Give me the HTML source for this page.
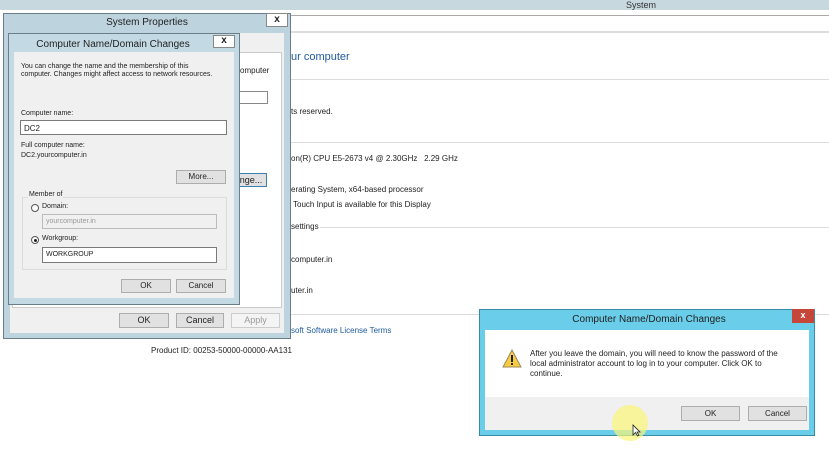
<!DOCTYPE html>
<html><head><style>
*{margin:0;padding:0;box-sizing:border-box}
body{width:829px;height:467px;overflow:hidden;background:#fff;font-family:"Liberation Sans",sans-serif;position:relative;font-size:9px;color:#222}
.a{position:absolute}
.btn{position:absolute;background:#e1e1e1;border:1px solid #adadad;text-align:center;font-size:9px;color:#222}
.in{position:absolute;background:#fff;border:1px solid #7a7a7a;font-size:8px;padding:3px 3px;color:#222}
.hr{position:absolute;left:291px;right:0;height:1px;background:#dcdcdc}
.t{position:absolute;font-size:8px;color:#222;white-space:nowrap}
</style></head><body>
<div class="a" style="left:0;top:0;width:829px;height:10px;background:#c7d8df"></div>
<div class="t" style="left:626px;top:0;font-size:9px;color:#333">System</div>
<div class="a" style="left:291px;top:15px;right:0;height:1px;background:#aaa"></div>
<div class="hr" style="top:31px;background:#ddd;height:2px"></div>
<div class="t" style="left:291px;top:51px;font-size:11px;color:#1e5a9e">ur computer</div>
<div class="hr" style="top:79px"></div>
<div class="t" style="left:291px;top:107px">ts reserved.</div>
<div class="hr" style="top:142px"></div>
<div class="t" style="left:291px;top:154px">on(R) CPU E5-2673 v4 @ 2.30GHz&nbsp;&nbsp; 2.29 GHz</div>
<div class="t" style="left:291px;top:185px">erating System, x64-based processor</div>
<div class="t" style="left:293px;top:200px">Touch Input is available for this Display</div>
<div class="t" style="left:291px;top:222px">settings</div>
<div class="a" style="left:320px;top:227px;right:0;height:1px;background:#ddd"></div>
<div class="t" style="left:291px;top:255px">computer.in</div>
<div class="t" style="left:291px;top:286px">uter.in</div>
<div class="hr" style="top:314px"></div>
<div class="t" style="left:291px;top:326px;color:#1e5a9e">soft Software License Terms</div>
<div class="t" style="left:151px;top:346px">Product ID: 00253-50000-00000-AA131</div>

<!-- System Properties -->
<div class="a" style="left:3px;top:13px;width:288px;height:326px;background:#bdd3de;border:1px solid #6b7f8a"></div>
<div class="t" style="left:3px;top:17px;width:288px;text-align:center;font-size:10px;color:#222">System Properties</div>
<div class="a" style="left:266px;top:13px;width:22px;height:14px;background:#fff;border:1px solid #888;font-size:10px;font-weight:bold;text-align:center;line-height:11px">x</div>
<div class="a" style="left:10px;top:33px;width:274px;height:300px;background:#f0f0f0"></div>
<div class="a" style="left:12px;top:52px;width:270px;height:256px;background:#fff;border:1px solid #ccc"></div>
<div class="t" style="left:240px;top:66px">omputer</div>
<div class="a" style="left:238px;top:91px;width:30px;height:13px;background:#fff;border:1px solid #888"></div>
<div class="btn" style="left:235px;top:173px;width:32px;height:14px;line-height:12px;border-color:#3c7fb1">nge...</div>
<div class="btn" style="left:119px;top:313px;width:50px;height:15px;line-height:13px">OK</div>
<div class="btn" style="left:176px;top:313px;width:48px;height:15px;line-height:13px">Cancel</div>
<div class="btn" style="left:231px;top:313px;width:49px;height:15px;line-height:13px;color:#999;background:#f4f4f4;border-color:#ccc">Apply</div>

<!-- Inner dialog -->
<div class="a" style="left:8px;top:33px;width:232px;height:272px;background:#c3d9e3;border:1px solid #6b7f8a"></div>
<div class="t" style="left:8px;top:39px;width:210px;text-align:center;font-size:10px;color:#222">Computer Name/Domain Changes</div>
<div class="a" style="left:213px;top:35px;width:22px;height:13px;background:#fff;border:1px solid #888;font-size:10px;font-weight:bold;text-align:center;line-height:10px">x</div>
<div class="a" style="left:14px;top:52px;width:220px;height:246px;background:#f0f0f0"></div>
<div class="t" style="left:21px;top:63px;font-size:7px;line-height:8px">You can change the name and the membership of this<br>computer. Changes might affect access to network resources.</div>
<div class="t" style="left:21px;top:110px;font-size:7px">Computer name:</div>
<div class="in" style="left:20px;top:120px;width:207px;height:15px">DC2</div>
<div class="t" style="left:21px;top:142px;font-size:7px">Full computer name:</div>
<div class="t" style="left:21px;top:152px;font-size:7px">DC2.yourcomputer.in</div>
<div class="btn" style="left:176px;top:170px;width:50px;height:14px;line-height:12px;font-size:8px">More...</div>
<div class="a" style="left:22px;top:197px;width:205px;height:73px;border:1px solid #dcdcdc"></div>
<div class="t" style="left:28px;top:191px;font-size:7px;background:#f0f0f0;padding:0 1px">Member of</div>
<div class="a" style="left:31px;top:204px;width:8px;height:8px;border:1px solid #555;border-radius:50%;background:#fff"></div>
<div class="t" style="left:42px;top:203px;font-size:7px">Domain:</div>
<div class="in" style="left:42px;top:214px;width:175px;height:15px;background:#f0f0f0;border-color:#bbb;color:#999;font-size:7px">yourcomputer.in</div>
<div class="a" style="left:31px;top:236px;width:8px;height:8px;border:1px solid #555;border-radius:50%;background:#fff"><div class="a" style="left:1.5px;top:1.5px;width:3px;height:3px;border-radius:50%;background:#222"></div></div>
<div class="t" style="left:42px;top:235px;font-size:7px">Workgroup:</div>
<div class="in" style="left:42px;top:247px;width:175px;height:16px;font-size:7px">WORKGROUP</div>
<div class="btn" style="left:121px;top:279px;width:50px;height:14px;line-height:12px;font-size:8px">OK</div>
<div class="btn" style="left:176px;top:279px;width:50px;height:14px;line-height:12px;font-size:8px">Cancel</div>

<!-- Popup -->
<div class="a" style="left:479px;top:309px;width:336px;height:127px;background:#6acde9;border:1px solid #3a8ba6"></div>
<div class="t" style="left:479px;top:314px;width:340px;text-align:center;font-size:10px;color:#222">Computer Name/Domain Changes</div>
<div class="a" style="left:792px;top:309px;width:22px;height:14px;background:#c7463a;color:#fff;font-size:9px;font-weight:bold;text-align:center;line-height:13px">x</div>
<div class="a" style="left:485px;top:330px;width:324px;height:100px;background:#fff"></div>
<div class="a" style="left:485px;top:397px;width:324px;height:33px;background:#f0f0f0"></div>
<svg class="a" style="left:502px;top:349px" width="20" height="19" viewBox="0 0 20 19"><path d="M10 1 L19 18 L1 18 Z" fill="#f6cd3e" stroke="#9a8a5a"/><rect x="9" y="6" width="2" height="7" fill="#222"/><rect x="9" y="14" width="2" height="2" fill="#222"/></svg>
<div class="t" style="left:530px;top:349px;font-size:8px;line-height:10px">After you leave the domain, you will need to know the password of the<br>local administrator account to log in to your computer. Click OK to<br>continue.</div>
<div class="btn" style="left:681px;top:406px;width:59px;height:15px;line-height:13px;font-size:8px">OK</div>
<div class="btn" style="left:748px;top:406px;width:59px;height:15px;line-height:13px;font-size:8px">Cancel</div>
<div class="a" style="left:612px;top:405px;width:36px;height:36px;border-radius:50%;background:rgba(250,245,120,0.7)"></div>
<svg class="a" style="left:632px;top:424px" width="9" height="13" viewBox="0 0 9 13"><path d="M1 1 L1 11 L3.5 8.5 L5.5 12 L7 11.3 L5 8 L8 8 Z" fill="#fff" stroke="#222" stroke-width="0.8"/></svg>
</body></html>
